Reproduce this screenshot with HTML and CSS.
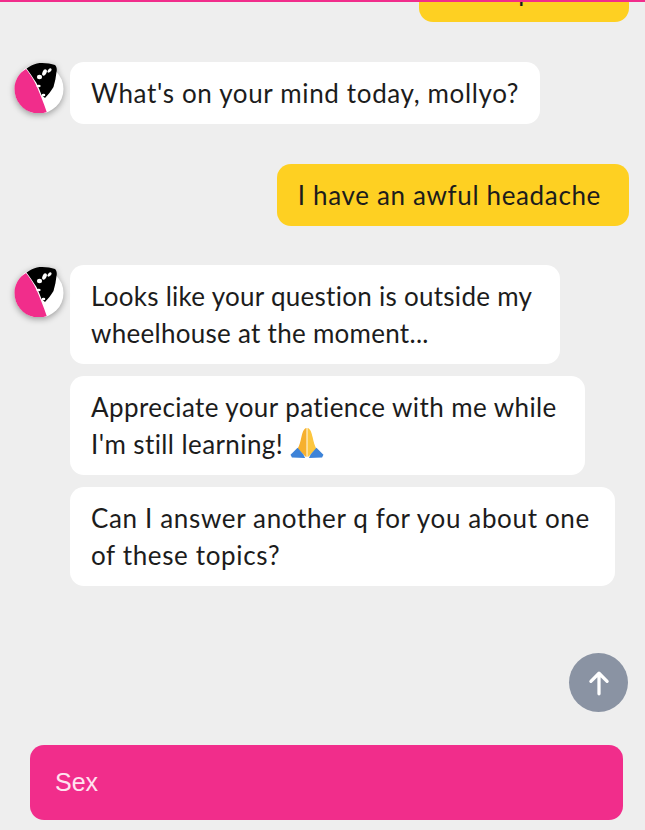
FILE: index.html
```html
<!DOCTYPE html>
<html lang="en">
<head>
    <meta charset="UTF-8">
    <meta name="viewport" content="width=device-width, initial-scale=1.0">
    <title>Chat</title>
    <link rel="stylesheet" href="styles.css">
</head>
<body>

    <div class="top-line"></div>

    <div class="chat">
        <!-- User message scrolled off the top -->
        <div class="row row-user row-top">
            <div class="bubble bubble-user bubble-top">Let me pick 1</div>
        </div>

        <div class="row row-bot">
            <svg class="avatar" viewBox="0 0 50 50">
                <circle cx="25" cy="26" r="24.5" fill="#fff"/>
                <path d="M12.500 5.500 C16 3 20 1 23 0.500 C29 -0.500 36 0.500 41 2 C43 4 43 7 42.500 9 C42 14 41 19 39.500 24 C37 28 34 32 31 35 L27.500 32 C26 28 24.500 24 22.500 20 C19 15 16 10 12.500 5.500 Z" fill="#000"/>
                <path d="M12 6 C16 11 20 17 23 24 C26.500 32 30 41 32.700 49 C30 50 27.500 50.500 25 50.500 C11 50.500 0.500 39.500 0.500 26 C0.500 17.500 5 10 12 6 Z" fill="#f12d8b"/>
                <ellipse cx="25.500" cy="14" rx="2.600" ry="2.200" fill="#fff"/>
                <ellipse cx="30.500" cy="9.500" rx="2" ry="3.400" fill="#fff" transform="rotate(25 30.500 9.500)"/>
                <ellipse cx="35.500" cy="7.500" rx="1.500" ry="2.600" fill="#fff" transform="rotate(45 35.500 7.500)"/>
                <ellipse cx="24.500" cy="23" rx="2.200" ry="1.300" fill="#fff"/>
                <ellipse cx="29.500" cy="32" rx="1.800" ry="1.300" fill="#fff"/>
            </svg>
            <div class="bubble bubble-bot bubble-short">What's on your mind today, mollyo?</div>
        </div>

        <div class="row row-user">
            <div class="bubble bubble-user">I have an awful headache</div>
        </div>

        <div class="row row-bot">
            <svg class="avatar avatar-low" viewBox="0 0 50 50">
                <circle cx="25" cy="26" r="24.5" fill="#fff"/>
                <path d="M12.500 5.500 C16 3 20 1 23 0.500 C29 -0.500 36 0.500 41 2 C43 4 43 7 42.500 9 C42 14 41 19 39.500 24 C37 28 34 32 31 35 L27.500 32 C26 28 24.500 24 22.500 20 C19 15 16 10 12.500 5.500 Z" fill="#000"/>
                <path d="M12 6 C16 11 20 17 23 24 C26.500 32 30 41 32.700 49 C30 50 27.500 50.500 25 50.500 C11 50.500 0.500 39.500 0.500 26 C0.500 17.500 5 10 12 6 Z" fill="#f12d8b"/>
                <ellipse cx="25.500" cy="14" rx="2.600" ry="2.200" fill="#fff"/>
                <ellipse cx="30.500" cy="9.500" rx="2" ry="3.400" fill="#fff" transform="rotate(25 30.500 9.500)"/>
                <ellipse cx="35.500" cy="7.500" rx="1.500" ry="2.600" fill="#fff" transform="rotate(45 35.500 7.500)"/>
                <ellipse cx="24.500" cy="23" rx="2.200" ry="1.300" fill="#fff"/>
                <ellipse cx="29.500" cy="32" rx="1.800" ry="1.300" fill="#fff"/>
            </svg>
            <div class="stack">
                <div class="bubble bubble-bot tight-1">Looks like your question is outside my<br>wheelhouse at the moment...</div>
                <div class="bubble bubble-bot tight-2">Appreciate your patience with me while<br>I'm still learning!
                    <svg class="emoji" viewBox="0 0 36 34">
                        <path d="M17.500 1 C14.500 1.500 13 6 12 11 C11 16 10 20 8 23 L11 26 L16 31 L17.500 32 Z" fill="#f6b02e"/>
                        <path d="M18.500 1 C21.500 1.500 23 6 24 11 C25 16 26 20 28 23 L25 26 L20 31 L18.500 32 Z" fill="#fcc63f"/>
                        <path d="M8 22 L0.500 29.500 L2 32.500 L16 33 L14 29 Z" fill="#3d83d8"/>
                        <path d="M28 22 L35.500 29.500 L34 32.500 L20 33 L22 29 Z" fill="#3d83d8"/>
                    </svg>
                </div>
                <div class="bubble bubble-bot bubble-wide">Can I answer another q for you about one<br>of these topics?</div>
            </div>
        </div>
    </div>

    <div class="scroll-row">
        <button class="scroll-btn">
            <svg viewBox="0 0 24 24" width="26" height="26">
                <path d="M12 22 V3 M4.500 10.500 L12 3 L19.500 10.500" fill="none" stroke="#fff" stroke-width="3" stroke-linecap="round" stroke-linejoin="round"/>
            </svg>
        </button>
    </div>

    <div class="footer">
        <button class="topic-btn">Sex</button>
    </div>

</body>
</html>
```

FILE: styles.css
```css
html, body {
    height: 100%;
}

body {
    margin: 0;
    padding: 0;
    background-color: #eeeeee;
    font-family: "Lato", "Liberation Sans", sans-serif;
    color: #1c1c1c;
    display: flex;
    flex-direction: column;
    overflow: hidden;
}

.top-line {
    height: 2px;
    background-color: #f12d8b;
    position: relative;
    z-index: 2;
    flex-shrink: 0;
}

.chat {
    height: 584px;
    padding: 0 16px 0 14px;
    display: flex;
    flex-direction: column;
    justify-content: flex-end;
    overflow: hidden;
    flex-shrink: 0;
}

.row {
    display: flex;
    flex-shrink: 0;
}

.row-user {
    justify-content: flex-end;
    margin-bottom: 39px;
}

.row-top {
    margin-bottom: 40px;
}

.row-bot {
    margin-bottom: 40px;
}

.row-bot:last-child {
    margin-bottom: 0;
}

.stack {
    display: flex;
    flex-direction: column;
    align-items: flex-start;
    gap: 12px;
}

.avatar {
    width: 50px;
    height: 50px;
    margin: 1px 6px 0 0;
    flex-shrink: 0;
    filter: drop-shadow(0 2px 3px rgba(0, 0, 0, 0.35));
}

.avatar-low {
    margin-top: 2px;
}

.bubble {
    font-size: 26px;
    letter-spacing: 0.65px;
    line-height: 37px;
    padding: 13px 28px 12px 21px;
    border-radius: 14px;
}

.bubble-bot {
    background-color: #ffffff;
}

.bubble-user {
    background-color: #fed022;
}

.bubble-short {
    padding-right: 21px;
}

.bubble-wide {
    padding-right: 25px;
}

.bubble-top {
    width: 171px;
    padding-left: 11px;
    white-space: nowrap;
}

.tight-1 {
    letter-spacing: 0.28px;
}

.tight-2 {
    letter-spacing: 0.41px;
}

.emoji {
    width: 34px;
    height: 32px;
    vertical-align: -5px;
}

.scroll-row {
    display: flex;
    justify-content: flex-end;
    padding: 67px 17px 0 0;
}

.scroll-btn {
    width: 59px;
    height: 59px;
    border: none;
    border-radius: 50%;
    background-color: #8a93a3;
    display: flex;
    align-items: center;
    justify-content: center;
    padding: 0;
}

.footer {
    padding: 33px 22px 0 30px;
}

.topic-btn {
    width: 100%;
    height: 75px;
    border: none;
    border-radius: 14px;
    background-color: #f12d8b;
    color: #ffe3f0;
    font-family: "Liberation Sans", sans-serif;
    font-size: 25px;
    text-align: left;
    padding: 0 25px;
}
```
